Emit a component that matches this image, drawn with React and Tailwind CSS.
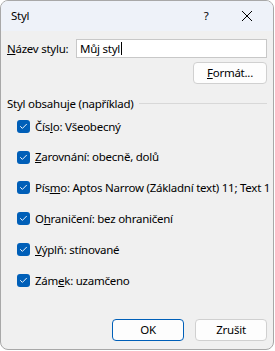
import { Check } from 'lucide-react'

const FONT = { fontFamily: '"Segoe UI", "Noto Sans", sans-serif' }

const ITEMS = [
  { pre: 'Čís', key: 'l', post: 'o: Všeobecný' },
  { pre: '', key: 'Z', post: 'arovnání: obecně, dolů' },
  { pre: 'Pís', key: 'm', post: 'o: Aptos Narrow (Základní text) 11; Text 1' },
  { pre: 'O', key: 'h', post: 'raničení: bez ohraničení' },
  { pre: '', key: 'V', post: 'ýplň: stínované' },
  { pre: 'Zám', key: 'e', post: 'k: uzamčeno' },
]

function Box() {
  return (
    <span className="w-[13px] h-[13px] rounded-[3px] bg-[#005fb8] flex items-center justify-center shrink-0">
      <Check className="w-[9px] h-[9px] text-white" strokeWidth={2.5} />
    </span>
  )
}

function Btn({ children, primary }) {
  return (
    <button className={`w-[72px] h-[22px] rounded-[4px] bg-[#fdfdfd] text-black flex items-center justify-center border ${primary ? 'border-[#005fb8]' : 'border-[#d0d0d0]'}`}>
      {children}
    </button>
  )
}

export default function App() {
  return (
    <div className="w-[275px] h-[351px] bg-white" style={FONT}>
      <div className="w-[274px] h-[350px] border border-[#a8a8a8] rounded-[8px] overflow-hidden bg-[#f0f0f0] flex flex-col text-[11.5px] tracking-[-0.25px] text-black">
        {/* title bar */}
        <div className="h-[30px] bg-[#eef2f9] flex items-center shrink-0">
          <span className="pl-[10px] flex-1">Styl</span>
          <span className="w-[20px] text-center mr-[25px]">?</span>
          <svg width="12" height="12" viewBox="0 0 12 12" className="mr-[20px]">
            <path d="M1 1 L11 11 M11 1 L1 11" stroke="#000" strokeWidth="1" />
          </svg>
        </div>

        <div className="flex-1 flex flex-col px-[6px]">
          <div className="flex items-center mt-[8px]">
            <span className="w-[69px]"><u>N</u>ázev stylu:</span>
            <div className="flex-1 h-[19px] bg-white border border-[#c8c8c8] flex items-center px-[3px]">
              Můj styl<span className="w-px h-[13px] bg-black ml-px" />
            </div>
          </div>

          <div className="flex justify-end mt-[4px]">
            <button className="w-[74px] h-[22px] rounded-[4px] bg-[#fdfdfd] border border-[#d0d0d0] flex items-center justify-center">
              <span><u>F</u>ormát...</span>
            </button>
          </div>

          <div className="flex items-center mt-[11px] gap-[5px]">
            <span>Styl obsahuje (například)</span>
            <span className="flex-1 h-px bg-[#d8d8d8]" />
          </div>

          <div className="flex flex-col mt-[6px] pl-[10px] gap-[14.8px]">
            {ITEMS.map(it => (
              <div key={it.post} className="flex items-center gap-[5px] h-[16px]">
                <Box />
                <span className="whitespace-nowrap">{it.pre}<u>{it.key}</u>{it.post}</span>
              </div>
            ))}
          </div>

          <div className="mt-auto mb-[8px] flex justify-end gap-[11px]">
            <Btn primary>OK</Btn>
            <Btn>Zrušit</Btn>
          </div>
        </div>
      </div>
    </div>
  )
}
